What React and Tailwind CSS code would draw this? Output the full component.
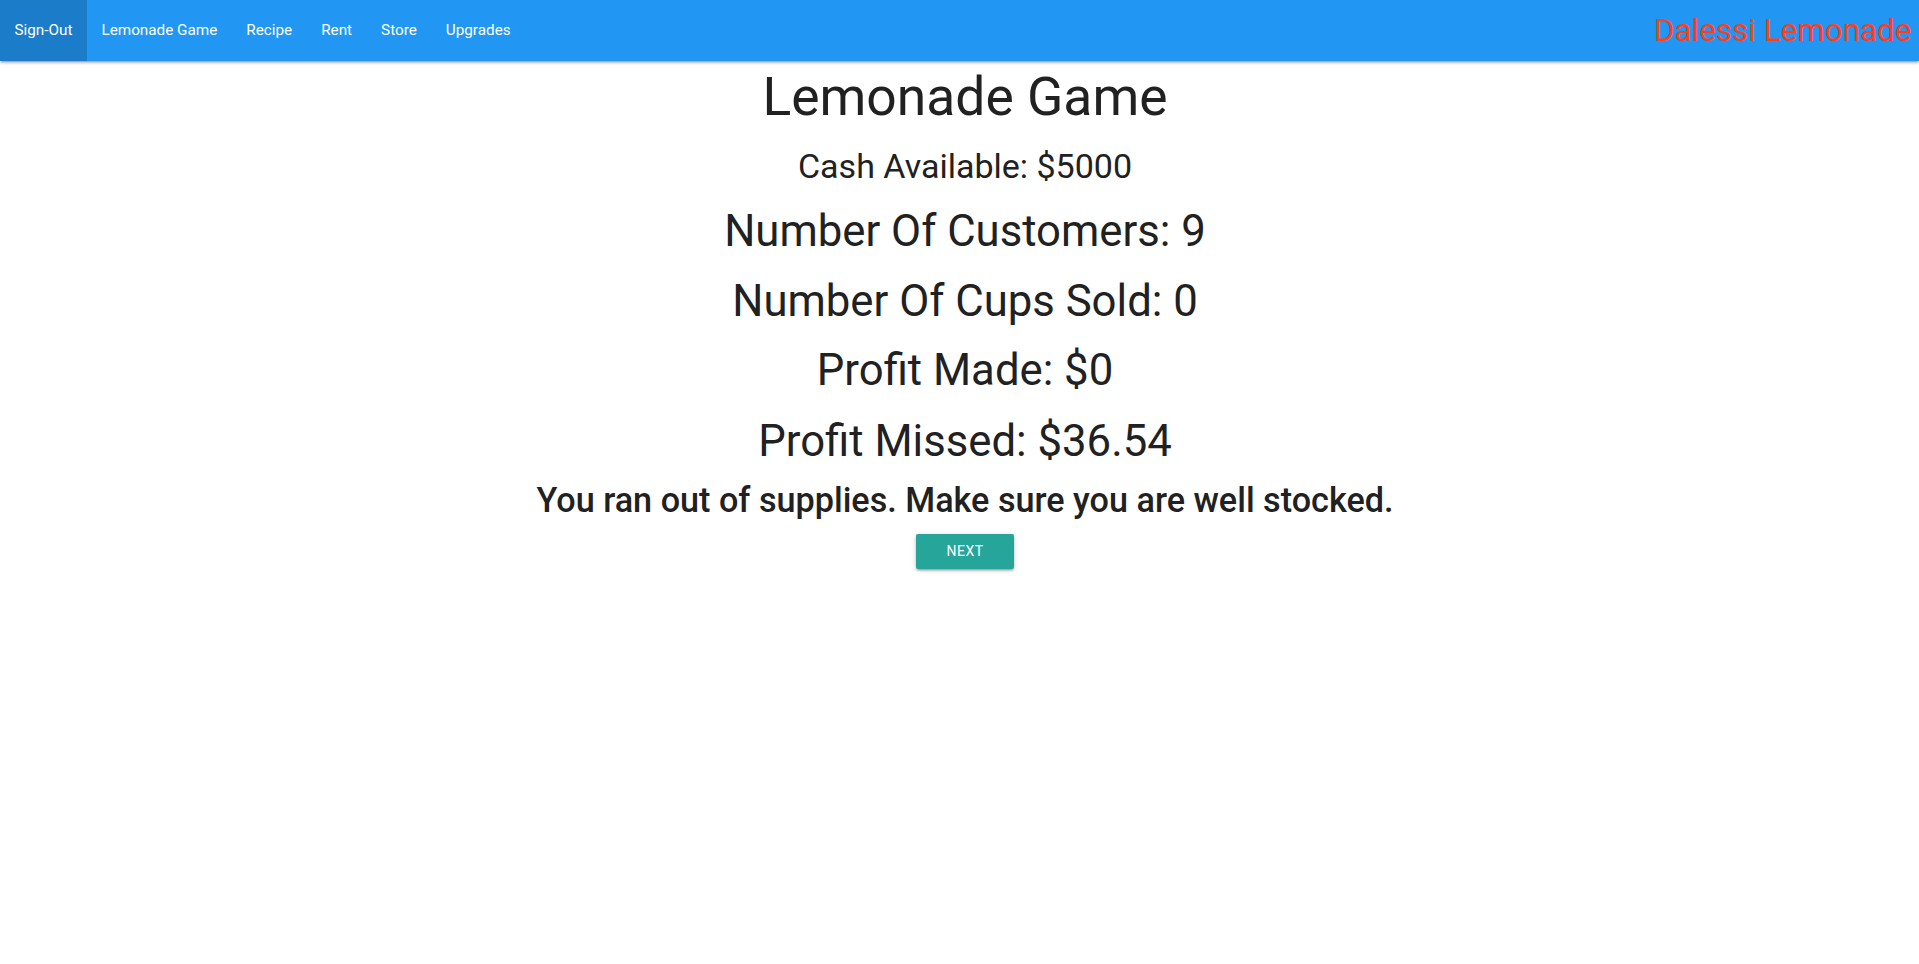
import React from "react";

const links = ["Sign-Out", "Lemonade Game", "Recipe", "Rent", "Store", "Upgrades"];

export default function App() {
  return (
    <div className="min-h-screen bg-white text-[#212121]" style={{ fontFamily: "Roboto, 'Noto Sans', sans-serif" }}>
      <nav className="relative z-10 flex h-[61px] items-stretch justify-between bg-[#2196F3] shadow-[0_2px_2px_0_rgba(0,0,0,0.14),0_3px_1px_-2px_rgba(0,0,0,0.12),0_1px_5px_0_rgba(0,0,0,0.2)]">
        <ul className="flex items-stretch">
          {links.map((l, i) => (
            <li key={l} className="flex">
              <a
                className={
                  "flex items-center px-[14.5px] text-[15.28px] text-white " +
                  (i === 0 ? "bg-[#1b7cca]" : "")
                }
              >
                {l}
              </a>
            </li>
          ))}
        </ul>
        <div className="flex items-center pr-[7.6px] text-[31.4px] text-[#ff3f1c]">Dalessi Lemonade</div>
      </nav>
      <main className="flex flex-col items-center pl-[11px] text-center">
        <div className="mt-[6.2px] text-[53.4px] leading-[60px]">Lemonade Game</div>
        <div className="mt-[18.9px] text-[34px] leading-[40px]">Cash Available: $5000</div>
        <div className="mt-[19.5px] text-[43.7px] leading-[50px]">Number Of Customers: 9</div>
        <div className="mt-[20px] text-[43.7px] leading-[50px]">Number Of Cups Sold: 0</div>
        <div className="mt-[19.5px] text-[43.7px] leading-[50px]">Profit Made: $0</div>
        <div className="mt-[20.5px] text-[43.7px] leading-[50px]">Profit Missed: $36.54</div>
        <div className="mt-[14px] text-[34.2px] font-medium leading-[40px]">You ran out of supplies. Make sure you are well stocked.</div>
        <button className="mt-[14.5px] flex h-[35px] w-[98px] items-center justify-center rounded-[2px] bg-[#26A69A] text-[14px] uppercase tracking-[0.5px] text-white shadow-[0_2px_2px_0_rgba(0,0,0,0.14),0_3px_1px_-2px_rgba(0,0,0,0.12),0_1px_5px_0_rgba(0,0,0,0.2)]">
          Next
        </button>
      </main>
    </div>
  );
}
